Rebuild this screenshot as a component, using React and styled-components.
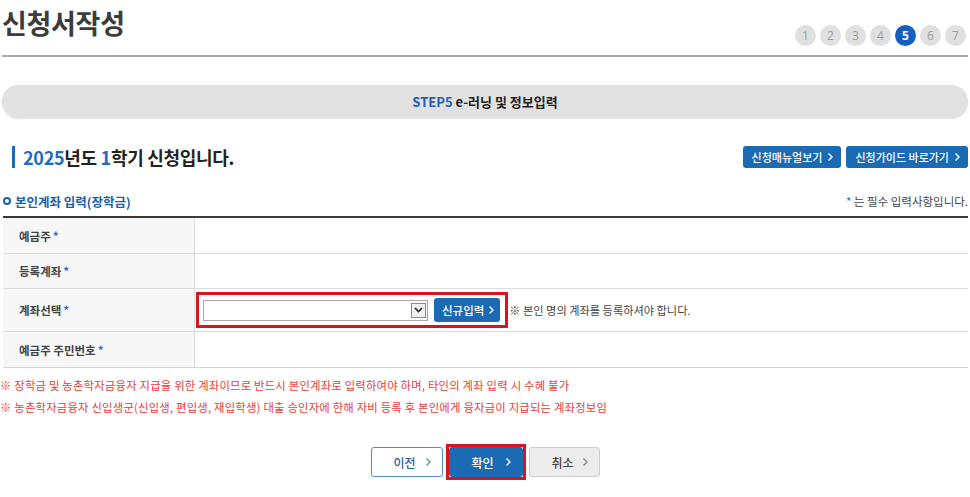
import React from 'react'
import styled, { createGlobalStyle } from 'styled-components'

const Global = createGlobalStyle`
  body {
    margin: 0;
    background: #fff;
    font-family: "Noto Sans CJK KR", "Noto Sans", sans-serif;
    color: #333;
  }
`

const Page = styled.div`
  width: 966px;
  padding: 0 4px 0 2px;
`

const Header = styled.div`
  height: 55px;
  display: flex;
  align-items: center;
  justify-content: space-between;
  border-bottom: 2px solid #a8a8a8;
`

const Title = styled.h1`
  margin: -10px 0 0 0;
  font-size: 27px;
  font-weight: 700;
  color: #3c3c3c;
  letter-spacing: -0.3px;
`

const Steps = styled.div`
  display: flex;
  gap: 4px;
  margin-top: 16px;
  margin-right: 2px;
`

const Step = styled.span`
  width: 21px;
  height: 21px;
  border-radius: 50%;
  display: flex;
  align-items: center;
  justify-content: center;
  font-family: "Open Sans", sans-serif;
  font-size: 12px;
  font-weight: ${p => (p.$on ? 700 : 400)};
  background: ${p => (p.$on ? '#1560bd' : '#e0e0e0')};
  color: ${p => (p.$on ? '#fff' : '#9a9a9a')};
`

const Banner = styled.div`
  margin-top: 28px;
  height: 33px;
  border-radius: 17px;
  background: #e1e1e1;
  box-shadow: 0 1px 2px rgba(0, 0, 0, 0.12);
  display: flex;
  align-items: center;
  justify-content: center;
  font-size: 13px;
  font-weight: 700;
  color: #222;
`

const Blue = styled.span`
  color: ${p => p.$c || '#1a63b8'};
`

const HeadRow = styled.div`
  margin-top: 28px;
  display: flex;
  align-items: center;
  justify-content: space-between;
  padding-left: 10px;
`

const Heading = styled.h2`
  margin: 0;
  font-size: 18px;
  font-weight: 700;
  color: #222;
  border-left: 3px solid #1a6db5;
  padding-left: 8px;
  height: 22px;
  line-height: 22px;
  letter-spacing: -0.3px;
`

const BtnGroup = styled.div`
  display: flex;
  gap: 5px;
`

const SmallBtn = styled.button`
  height: 22px;
  padding: 0 7px 0 9px;
  border: none;
  border-radius: 3px;
  background: #1a6bb3;
  color: #fff;
  font-family: inherit;
  font-size: 11px;
  font-weight: 500;
  display: flex;
  align-items: center;
  gap: 5px;
  white-space: nowrap;
`

const SectionRow = styled.div`
  margin-top: 25px;
  display: flex;
  align-items: center;
  justify-content: space-between;
  height: 16px;
`

const SectionTitle = styled.div`
  display: flex;
  align-items: center;
  gap: 4px;
  font-size: 12.5px;
  font-weight: 700;
  color: #1c5fa8;
`

const Ring = styled.span`
  width: 4px;
  height: 4px;
  border: 2px solid #1c5fa8;
  border-radius: 50%;
  margin-left: 1px;
`

const Required = styled.div`
  font-size: 11.5px;
  color: #444;
`

const Table = styled.div`
  margin-top: 7px;
  margin-left: 1px;
  border-top: 2px solid #3a3a3a;
  border-bottom: 1px solid #d4d4d4;
`

const Row = styled.div`
  display: grid;
  grid-template-columns: 192px 1fr;
  height: ${p => p.$h}px;
  & + & {
    border-top: 1px solid #dcdcdc;
  }
`

const Label = styled.div`
  background: #f7f7f7;
  border-right: 1px solid #dcdcdc;
  display: flex;
  align-items: center;
  padding-left: 16px;
  font-size: 11.5px;
  font-weight: 700;
  color: #444;
`

const Star = styled.span`
  color: #2a6ed0;
  margin-left: 2px;
`

const Cell = styled.div`
  display: flex;
  align-items: center;
  padding-left: 1px;
`

const Highlight = styled.div`
  display: flex;
  align-items: center;
  gap: 6px;
  border: 3px solid #d8141f;
  padding: 3px 5px 3px 4px;
`

const Select = styled.div`
  width: 222px;
  height: 19px;
  border: 1px solid #a9a9a9;
  background: #fff;
  display: flex;
  justify-content: flex-end;
  align-items: center;
  padding-right: 1px;
`

const Arrow = styled.span`
  width: 15px;
  height: 15px;
  border: 1px solid #8a8a8a;
  background: #f0f0f0;
  display: flex;
  align-items: center;
  justify-content: center;
  box-sizing: border-box;
`

const NewBtn = styled(SmallBtn)`
  height: 24px;
  padding: 0 5px 0 8px;
  font-size: 11.5px;
  gap: 4px;
`

const Note = styled.span`
  margin-left: 1px;
  font-size: 11.2px;
  color: #444;
`

const Warnings = styled.div`
  margin-top: 8px;
  display: flex;
  flex-direction: column;
  gap: 4px;
  margin-left: -2px;
`

const Warn = styled.p`
  margin: 0;
  font-size: 11.35px;
  line-height: 18px;
  letter-spacing: 0.2px;
  color: #e5403a;
`

const Actions = styled.div`
  margin-top: 28px;
  display: flex;
  justify-content: center;
`

const Frame = styled.div`
  border: 3px solid ${p => (p.$red ? '#d8141f' : 'transparent')};
`

const ActBtn = styled.button`
  width: ${p => p.$w}px;
  height: 30px;
  border-radius: 3px;
  box-sizing: border-box;
  font-family: inherit;
  font-size: 12px;
  font-weight: 500;
  white-space: nowrap;
  display: flex;
  align-items: center;
  justify-content: space-between;
  padding: 0 10px 0 22px;
  background: ${p => (p.$kind === 'primary' ? '#1a6bb3' : p.$kind === 'gray' ? '#ececec' : '#fff')};
  color: ${p => (p.$kind === 'primary' ? '#fff' : p.$kind === 'gray' ? '#444' : '#2a5f9e')};
  border: 1px solid ${p => (p.$kind === 'primary' ? '#1a6bb3' : p.$kind === 'gray' ? '#cfcfcf' : '#4f8fcf')};
`

const Chev = ({ color = '#fff', size = 7 }) => (
  <svg width={size} height={size + 3} viewBox="0 0 7 10" fill="none">
    <path d="M1.5 1.5 L5 5 L1.5 8.5" stroke={color} strokeWidth="1.4" />
  </svg>
)

export default function App() {
  return (
    <>
      <Global />
      <Page>
        <Header>
          <Title>신청서작성</Title>
          <Steps>
            {[1, 2, 3, 4, 5, 6, 7].map(n => (
              <Step key={n} $on={n === 5}>{n}</Step>
            ))}
          </Steps>
        </Header>

        <Banner>
          <Blue $c="#1a5fc0">STEP5</Blue>&nbsp;e-러닝 및 정보입력
        </Banner>

        <HeadRow>
          <Heading>
            <Blue $c="#1e6cc4">2025</Blue>년도 <Blue $c="#1e6cc4">1</Blue>학기 신청입니다.
          </Heading>
          <BtnGroup>
            <SmallBtn>신청매뉴얼보기 <Chev /></SmallBtn>
            <SmallBtn>신청가이드 바로가기 <Chev /></SmallBtn>
          </BtnGroup>
        </HeadRow>

        <SectionRow>
          <SectionTitle>
            <Ring />
            본인계좌 입력(장학금)
          </SectionTitle>
          <Required>
            <Star>*</Star> 는 필수 입력사항입니다.
          </Required>
        </SectionRow>

        <Table>
          <Row $h={35}>
            <Label>예금주<Star>*</Star></Label>
            <Cell />
          </Row>
          <Row $h={34}>
            <Label>등록계좌<Star>*</Star></Label>
            <Cell />
          </Row>
          <Row $h={42}>
            <Label>계좌선택<Star>*</Star></Label>
            <Cell>
              <Highlight>
                <Select>
                  <Arrow>
                    <svg width="9" height="6" viewBox="0 0 9 6">
                      <path d="M1 1 L4.5 4.5 L8 1" stroke="#222" strokeWidth="1.6" fill="none" />
                    </svg>
                  </Arrow>
                </Select>
                <NewBtn>신규입력 <Chev /></NewBtn>
              </Highlight>
              <Note>※ 본인 명의 계좌를 등록하셔야 합니다.</Note>
            </Cell>
          </Row>
          <Row $h={35}>
            <Label>예금주 주민번호<Star>*</Star></Label>
            <Cell />
          </Row>
        </Table>

        <Warnings>
          <Warn>※ 장학금 및 농촌학자금융자 지급을 위한 계좌이므로 반드시 본인계좌로 입력하여야 하며, 타인의 계좌 입력 시 수혜 불가</Warn>
          <Warn>※ 농촌학자금융자 신입생군(신입생, 편입생, 재입학생) 대출 승인자에 한해 자비 등록 후 본인에게 융자금이 지급되는 계좌정보임</Warn>
        </Warnings>

        <Actions>
          <Frame>
            <ActBtn $w={72} $kind="line">이전<Chev color="#5a8fc8" /></ActBtn>
          </Frame>
          <Frame $red>
            <ActBtn $w={74} $kind="primary">확인<Chev /></ActBtn>
          </Frame>
          <Frame>
            <ActBtn $w={71} $kind="gray">취소<Chev color="#888" /></ActBtn>
          </Frame>
        </Actions>
      </Page>
    </>
  )
}
